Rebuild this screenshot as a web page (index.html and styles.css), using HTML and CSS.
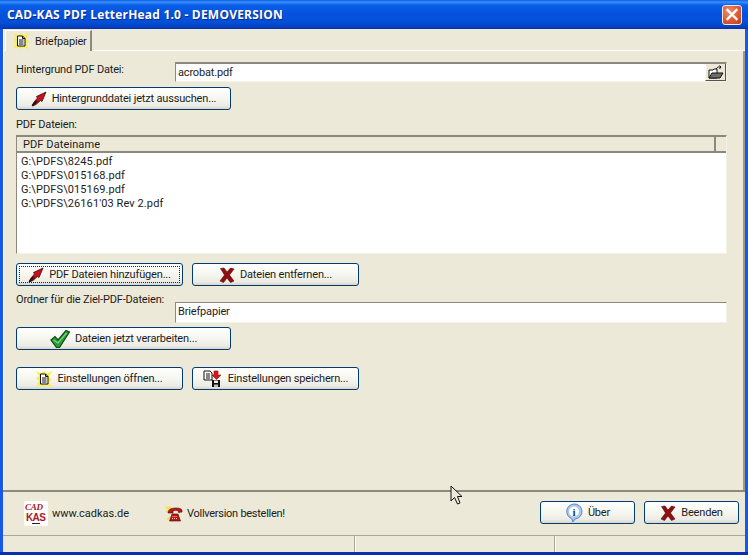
FILE: index.html
```html
<!DOCTYPE html>
<html lang="de">
<head>
<meta charset="utf-8">
<title>CAD-KAS PDF LetterHead 1.0</title>
<link rel="stylesheet" href="styles.css">
</head>
<body>
<svg width="0" height="0" class="defs">
  <defs>
    <symbol id="arrow" viewBox="0 0 16 16">
      <path d="M1 15 L3 11 L6.500 7 L5.500 5.500 L15 1 L11 10.500 L9.500 9.500 L5 13.500 Z" fill="#c8101c" stroke="#3a1010" stroke-width=".8"/>
      <path d="M1.500 14.500 L6 10" stroke="#301010" stroke-width="2" fill="none"/>
    </symbol>
    <symbol id="cross" viewBox="0 0 16 16">
      <path d="M1.500 1.500 L5 1 L8 5 L11.500 1 L15 2 L10.500 8 L15 14 L11.500 15.500 L8 11 L4.500 15.500 L1 14 L5.500 8 Z" fill="#8c1010" stroke="#600808" stroke-width=".6"/>
    </symbol>
    <symbol id="check" viewBox="0 0 20 18">
      <path d="M1 10 L5 6.500 L8 10 L16 0.500 L19.500 2 L9.500 17.500 L6.500 17.500 Z" fill="#2a9a30" stroke="#0d4f1d" stroke-width="1.200"/>
      <path d="M3.500 10 L8 13 L16.500 3" stroke="#80d880" stroke-width="1.200" fill="none"/>
    </symbol>
    <symbol id="doc" viewBox="0 0 16 16">
      <path d="M0 0 L5 2.500 L8 0 L11 2.500 L16 0 L13 6 L16 9 L13 11 L16 16 L10 14 L8 16 L5 14 L0 16 L3 10 L0 7 L3 5 Z" fill="#f8f040"/>
      <path d="M4.500 3 H9.500 L12 5.500 V13 H4.500 Z" fill="#fff" stroke="#111" stroke-width="1"/>
      <path d="M9.500 3 V5.500 H12 M6 7 H10.500 M6 9 H10.500 M6 11 H10.500" fill="none" stroke="#111" stroke-width="1"/>
    </symbol>
  </defs>
</svg>
<div class="window">
  <header class="titlebar">
    <span class="title">CAD-KAS PDF LetterHead 1.0 - DEMOVERSION</span>
    <span class="close"><svg viewBox="0 0 20 20" width="19" height="19"><path d="M5 5 L15 15 M15 5 L5 15" stroke="#fff" stroke-width="2.600" stroke-linecap="square"/></svg></span>
  </header>
  <div class="client">
    <div class="tabstrip">
      <div class="tab">
        <svg class="icon16"><use href="#doc"/></svg>
        <span>Briefpapier</span>
      </div>
    </div>
    <main class="page">
      <div class="field-row first">
        <label class="field-label">Hintergrund PDF Datei:</label>
        <div class="input">acrobat.pdf
          <span class="browse">
            <svg viewBox="0 0 18 15" width="18" height="15"><path d="M2 5 H6 L7 4 H10 V13 H2 Z" fill="#fff" stroke="#111"/><path d="M2 13 L5 8 H16 L13 13 Z" fill="#6e6e68" stroke="#111"/><path d="M9 4 Q11 1 14 2 M14 2 L12.500 .5 M14 2 L12.500 4" fill="none" stroke="#111"/></svg>
          </span>
        </div>
      </div>
      <div class="row r-browse">
        <button class="btn wide"><svg class="icon16"><use href="#arrow"/></svg>Hintergrunddatei jetzt aussuchen...</button>
      </div>
      <div class="section-label">PDF Dateien:</div>
      <div class="list">
        <div class="list-head"><span class="col-main">PDF Dateiname</span><span class="col-rest"></span></div>
        <ul class="list-body">
          <li>G:\PDFS\8245.pdf</li>
          <li>G:\PDFS\015168.pdf</li>
          <li>G:\PDFS\015169.pdf</li>
          <li>G:\PDFS\26161'03 Rev 2.pdf</li>
        </ul>
      </div>
      <div class="row r-add">
        <button class="btn mid focus"><span class="focus-ring"></span><svg class="icon16"><use href="#arrow"/></svg>PDF Dateien hinzufügen...</button>
        <button class="btn mid"><svg class="icon16"><use href="#cross"/></svg>Dateien entfernen...</button>
      </div>
      <div class="field-row second">
        <label class="field-label up">Ordner für die Ziel-PDF-Dateien:</label>
        <div class="input tall">Briefpapier</div>
      </div>
      <div class="row r-run">
        <button class="btn wide"><svg class="icon-check"><use href="#check"/></svg>Dateien jetzt verarbeiten...</button>
      </div>
      <div class="row r-settings">
        <button class="btn mid"><svg class="icon16"><use href="#doc"/></svg>Einstellungen öffnen...</button>
        <button class="btn mid">
          <svg viewBox="0 0 20 17" width="20" height="17"><path d="M1 1 H7 L9 3 V10 H1 Z" fill="#fff" stroke="#111"/><path d="M3 4 H7 M3 6 H7 M3 8 H7" stroke="#111"/><path d="M11 1 L15 1 L15 5 L18 5 L13.500 9.500 L9 5 L11 5 Z" fill="#d81818" stroke="#901010" stroke-width=".6"/><rect x="9" y="10" width="8" height="7" fill="#111"/><rect x="11" y="10.500" width="4" height="2.500" fill="#eee"/><rect x="11" y="14.500" width="4" height="2.500" fill="#bbb"/></svg>Einstellungen speichern...</button>
      </div>
    </main>
    <footer class="footer">
      <div class="links">
        <span class="logo">
          <svg viewBox="0 0 24 25" width="24" height="25"><rect width="24" height="25" rx="2" fill="#fff"/><text x="1" y="9" class="logo-a">CAD</text><text x="2" y="20" class="logo-b">KAS</text><rect x="8" y="22" width="8" height="1" fill="#222"/></svg>
        </span>
        <span class="link-text">www.cadkas.de</span>
        <span class="phone">
          <svg viewBox="0 0 18 16" width="18" height="16"><path d="M0 1 L4 4 M3 0 L5 3 M0 5 L3 6 M1 14 L4 11" stroke="#f4e020" stroke-width="1.500"/><path d="M2 7 Q2 2 10 2 Q17 2 16 6 L12.500 6.500 L12 4.500 Q9 4 7 5 L7 7 Z" fill="#b81818" stroke="#500" stroke-width=".6"/><path d="M6 8 H12 L14.500 15 H3.500 Z" fill="#b81818" stroke="#500" stroke-width=".6"/><path d="M6.500 10.500 H11 M6 12.500 H12" stroke="#f4d0a0" stroke-dasharray="1 1"/></svg>
        </span>
        <span class="order-text">Vollversion bestellen!</span>
      </div>
      <div class="actions">
        <button class="btn small-btn">
          <svg viewBox="0 0 18 20" width="18" height="20"><path d="M9 1 A7.500 7.500 0 0 1 10 16 L8 19 L6.500 15.500 A7.500 7.500 0 0 1 9 1Z" fill="#a8c8f0" stroke="#5f88c8"/><circle cx="9" cy="8.500" r="5" fill="#fff"/><text x="9" y="12.500" class="info-i">i</text></svg>Über</button>
        <button class="btn small-btn"><svg class="icon16"><use href="#cross"/></svg>Beenden</button>
      </div>
    </footer>
    <div class="statusbar">
      <span class="cell c1"></span><span class="cell c2"></span><span class="cell c3"></span>
    </div>
  </div>
  <svg class="cursor" viewBox="0 0 14 20" width="14" height="20"><path d="M1 1 V16 L4.500 12.500 L7.500 19 L10 18 L7.500 11.500 L12 11.500 Z" fill="#ece9d8" stroke="#111" stroke-width="1"/></svg>
</div>
</body>
</html>
```
FILE: styles.css
```css
* { box-sizing: border-box; }
html, body { margin: 0; padding: 0; }
body {
  width: 748px;
  height: 555px;
  overflow: hidden;
  font-family: Roboto, "Liberation Sans", Arial, sans-serif;
  font-size: 11px;
  letter-spacing: -.17px;
  color: #1c1c1c;
  background: #ece9d8;
}
.defs { position: absolute; }
.window {
  position: relative;
  width: 748px;
  height: 555px;
  display: flex;
  flex-direction: column;
  background: #1659e6;
  padding: 0 3px;
  border-bottom: 3px solid #0a2fb0;
}
.titlebar {
  height: 29px;
  margin: 0 -3px;
  padding: 0 6px 0 7px;
  flex: none;
  display: flex;
  align-items: center;
  justify-content: space-between;
  background: linear-gradient(180deg, #0a5ce6 0, #3c90f8 2px, #0a5ee8 5px, #0452dc 14px, #0350d8 22px, #0340c0 27px, #0a2fa8 29px);
}
.title {
  font-family: "Open Sans", "Liberation Sans", sans-serif;
  font-weight: 700;
  font-size: 12px;
  letter-spacing: .2px;
  color: #fff;
  text-shadow: 1px 1px 0 #0a2a90;
}
.close {
  width: 20px;
  height: 20px;
  display: flex;
  align-items: center;
  justify-content: center;
  border: 1px solid #f6e8e0;
  border-radius: 3px;
  background: radial-gradient(circle at 35% 30%, #ec9070 0, #dc5a34 55%, #c03c18 100%);
}
.client {
  flex: 1;
  min-height: 0;
  display: flex;
  flex-direction: column;
  background: #ece9d8;
}
.tabstrip {
  height: 22px;
  flex: none;
  padding: 1px 0 0 1px;
  border-bottom: 1px solid #fff;
  border-left: 1px solid #fff;
}
.tab {
  width: 87px;
  height: 21px;
  padding: 0 0 0 7px;
  display: flex;
  align-items: center;
  gap: 6px;
  background: #ece9d8;
  border-top: 1px solid #fff;
  border-left: 1px solid #fff;
  border-right: 2px solid #8c8a7c;
}
.page {
  flex: 1;
  min-height: 0;
  padding: 0 0 0 12px;
  border-left: 1px solid #fff;
  border-right: 2px solid #9d9b8d;
}
.icon16 { width: 16px; height: 16px; flex: none; }
.icon-check { width: 20px; height: 18px; flex: none; }

.field-row {
  display: flex;
  width: 711px;
  align-items: flex-start;
}
.field-row.first { margin-top: 11px; height: 20px; }
.field-row.second { margin-top: 16px; height: 21px; }
.field-label {
  width: 159px;
  flex: none;
  margin-top: 1px;
  line-height: 14px;
  white-space: nowrap;
}
.field-label.up { margin-top: -9px; }
.input {
  position: relative;
  flex: 1;
  height: 20px;
  padding-left: 2px;
  line-height: 17px;
  background: #fff;
  border-top: 2px solid #8c8a7c;
  border-left: 1px solid #8c8a7c;
  border-right: 1px solid #f4f2e8;
  border-bottom: 1px solid #f4f2e8;
}
.input.tall { height: 21px; border-top-width: 1px; line-height: 18px; }
.browse {
  position: absolute;
  right: 0;
  top: 0;
  width: 21px;
  height: 17px;
  display: flex;
  align-items: center;
  justify-content: center;
  background: #ece9d8;
  border-right: 1px solid #55534a;
  border-bottom: 1px solid #55534a;
  border-left: 1px solid #fff;
}
.row { display: flex; gap: 9px; }
.r-browse { margin-top: 5px; }
.r-add { margin-top: 9px; }
.r-run { margin-top: 4px; }
.r-settings { margin-top: 17px; }
.section-label { margin-top: 7px; line-height: 14px; height: 18px; padding-top: 1px; }
.btn {
  position: relative;
  height: 23px;
  display: flex;
  align-items: center;
  justify-content: center;
  gap: 5px;
  padding: 0;
  font: inherit;
  letter-spacing: inherit;
  color: inherit;
  border: 1px solid #003c74;
  border-radius: 3px;
  background: linear-gradient(180deg, #fff 0, #f6f6f0 50%, #ecebe4 85%, #d8d4c8 100%);
}
.wide { width: 215px; }
.mid { width: 167px; }
.small-btn { width: 95px; }
.focus-ring {
  position: absolute;
  inset: 2px;
  border: 1px dotted #222;
}
.list {
  width: 711px;
  height: 119px;
  background: #fff;
  border-top: 1px solid #8c8a7c;
  border-left: 1px solid #8c8a7c;
  border-right: 1px solid #f4f2e8;
  border-bottom: 1px solid #f4f2e8;
}
.list-head {
  height: 17px;
  display: flex;
  background: #ece9d8;
  border-top: 1px solid #8c8a7c;
  border-bottom: 2px solid #8c8a7c;
}
.col-main {
  flex: 1;
  padding-left: 6px;
  line-height: 15px;
  letter-spacing: .1px;
  border-right: 2px solid #8c8a7c;
}
.col-rest { width: 10px; }
.list-body {
  list-style: none;
  margin: 0;
  padding: 2px 0 0 4px;
  letter-spacing: .1px;
}
.list-body li { height: 14px; line-height: 14px; }
.footer {
  flex: none;
  height: 45px;
  padding: 9px 5px 0 21px;
  display: flex;
  justify-content: space-between;
  align-items: flex-start;
  border-top: 2px solid #8c8a7c;
}
.links {
  display: flex;
  align-items: center;
  height: 25px;
}
.logo { display: inline-flex; margin-right: 4px; }
.logo-a { font: italic 700 9px "Liberation Serif", serif; fill: #a81820; letter-spacing: -.3px; }
.logo-b { font: 700 10px "Liberation Sans", sans-serif; fill: #a81820; letter-spacing: -.6px; }
.info-i { font: 700 11px "Liberation Serif", serif; fill: #123a90; text-anchor: middle; letter-spacing: 0; }
.link-text { width: 114px; letter-spacing: 0; }
.order-text { letter-spacing: -.27px; }
.phone { display: inline-flex; margin-right: 3px; }
.actions { display: flex; gap: 9px; margin-right: 1px; }
.statusbar {
  flex: none;
  height: 17px;
  display: flex;
  border-top: 1px solid #a9a797;
}
.cell { border-right: 1px solid #a9a797; box-shadow: 1px 0 0 #fff; }
.c1 { width: 352px; }
.c2 { width: 200px; }
.c3 { flex: 1; border-right: 0; box-shadow: none; }
.cursor { position: absolute; left: 450px; top: 485px; }
```
